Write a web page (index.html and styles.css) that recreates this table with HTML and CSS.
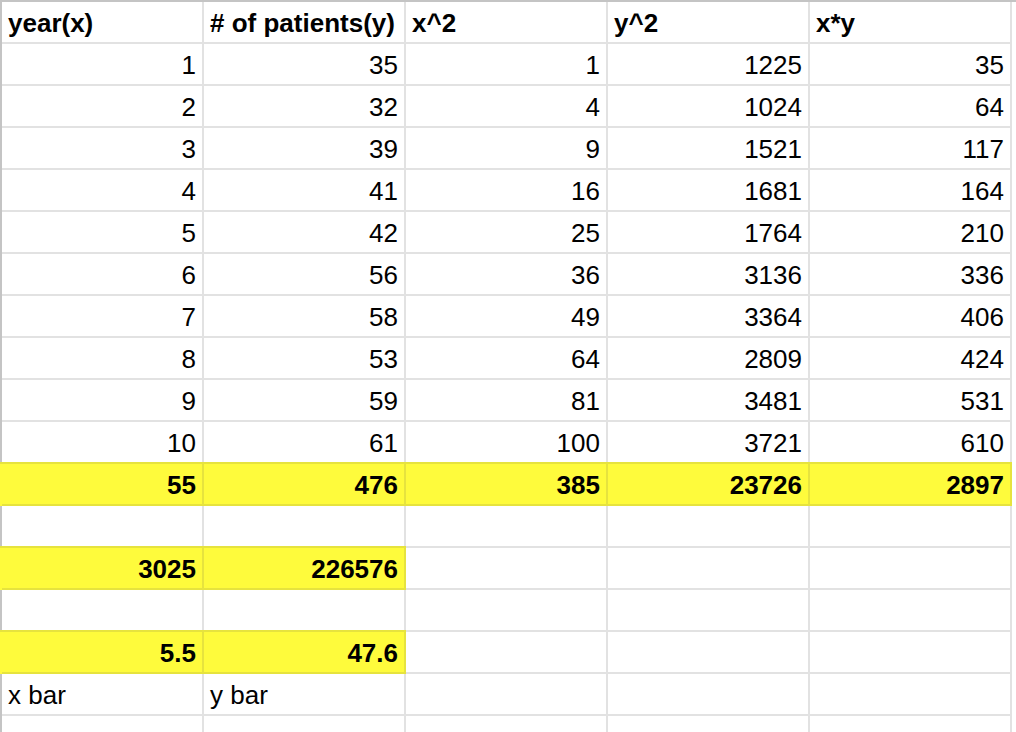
FILE: index.html
```html
<!DOCTYPE html>
<html>
<head>
<meta charset="utf-8">
<link rel="stylesheet" href="styles.css">
</head>
<body>
<div class="page">
  <div class="sheet">
    <div class="c h">year(x)</div><div class="c h">#&nbsp;of patients(y)</div><div class="c h">x^2</div><div class="c h">y^2</div><div class="c h">x*y</div>
    <div class="c n">1</div><div class="c n">35</div><div class="c n">1</div><div class="c n">1225</div><div class="c n">35</div>
    <div class="c n">2</div><div class="c n">32</div><div class="c n">4</div><div class="c n">1024</div><div class="c n">64</div>
    <div class="c n">3</div><div class="c n">39</div><div class="c n">9</div><div class="c n">1521</div><div class="c n">117</div>
    <div class="c n">4</div><div class="c n">41</div><div class="c n">16</div><div class="c n">1681</div><div class="c n">164</div>
    <div class="c n">5</div><div class="c n">42</div><div class="c n">25</div><div class="c n">1764</div><div class="c n">210</div>
    <div class="c n">6</div><div class="c n">56</div><div class="c n">36</div><div class="c n">3136</div><div class="c n">336</div>
    <div class="c n">7</div><div class="c n">58</div><div class="c n">49</div><div class="c n">3364</div><div class="c n">406</div>
    <div class="c n">8</div><div class="c n">53</div><div class="c n">64</div><div class="c n">2809</div><div class="c n">424</div>
    <div class="c n">9</div><div class="c n">59</div><div class="c n">81</div><div class="c n">3481</div><div class="c n">531</div>
    <div class="c n">10</div><div class="c n">61</div><div class="c n">100</div><div class="c n">3721</div><div class="c n">610</div>
    <div class="c n b hl first">55</div><div class="c n b hl">476</div><div class="c n b hl">385</div><div class="c n b hl">23726</div><div class="c n b hl">2897</div>
    <div class="c"></div><div class="c"></div><div class="c"></div><div class="c"></div><div class="c"></div>
    <div class="c n b hl first">3025</div><div class="c n b hl">226576</div><div class="c"></div><div class="c"></div><div class="c"></div>
    <div class="c"></div><div class="c"></div><div class="c"></div><div class="c"></div><div class="c"></div>
    <div class="c n b hl first">5.5</div><div class="c n b hl">47.6</div><div class="c"></div><div class="c"></div><div class="c"></div>
    <div class="c">x bar</div><div class="c">y bar</div><div class="c"></div><div class="c"></div><div class="c"></div>
    <div class="c"></div><div class="c"></div><div class="c"></div><div class="c"></div><div class="c"></div>
  </div>
</div>
</body>
</html>
```
FILE: styles.css
```css
html, body {
  margin: 0;
  padding: 0;
  background: #ffffff;
}
body {
  width: 1016px;
  height: 732px;
  overflow: hidden;
}
.page {
  border-top: 2px solid #c4c4c4;
  height: 730px;
  overflow: hidden;
}
.sheet {
  display: grid;
  grid-template-columns: repeat(5, 202px);
  grid-auto-rows: 42px;
  width: 1010px;
  border-left: 2px solid #c4c4c4;
  font-family: "Liberation Sans", Arial, sans-serif;
  font-size: 26px;
  color: #000;
}
.c {
  box-sizing: border-box;
  border-right: 2px solid #e2e2e2;
  border-bottom: 2px solid #e2e2e2;
  padding: 0 6px 5px 6px;
  display: flex;
  align-items: flex-end;
  line-height: 28px;
  white-space: nowrap;
  overflow: visible;
}
.h {
  font-weight: bold;
}
.n {
  justify-content: flex-end;
}
.b {
  font-weight: bold;
}
.hl {
  background: #fefb3c;
  border-right-color: #e6e33e;
  border-bottom-color: #e6e33e;
  box-shadow: 0 -2px 0 #e6e33e;
}
.hl.first {
  box-shadow: 0 -2px 0 #e6e33e, -2px 0 0 #fefb3c, -2px -2px 0 #e6e33e;
}
```
